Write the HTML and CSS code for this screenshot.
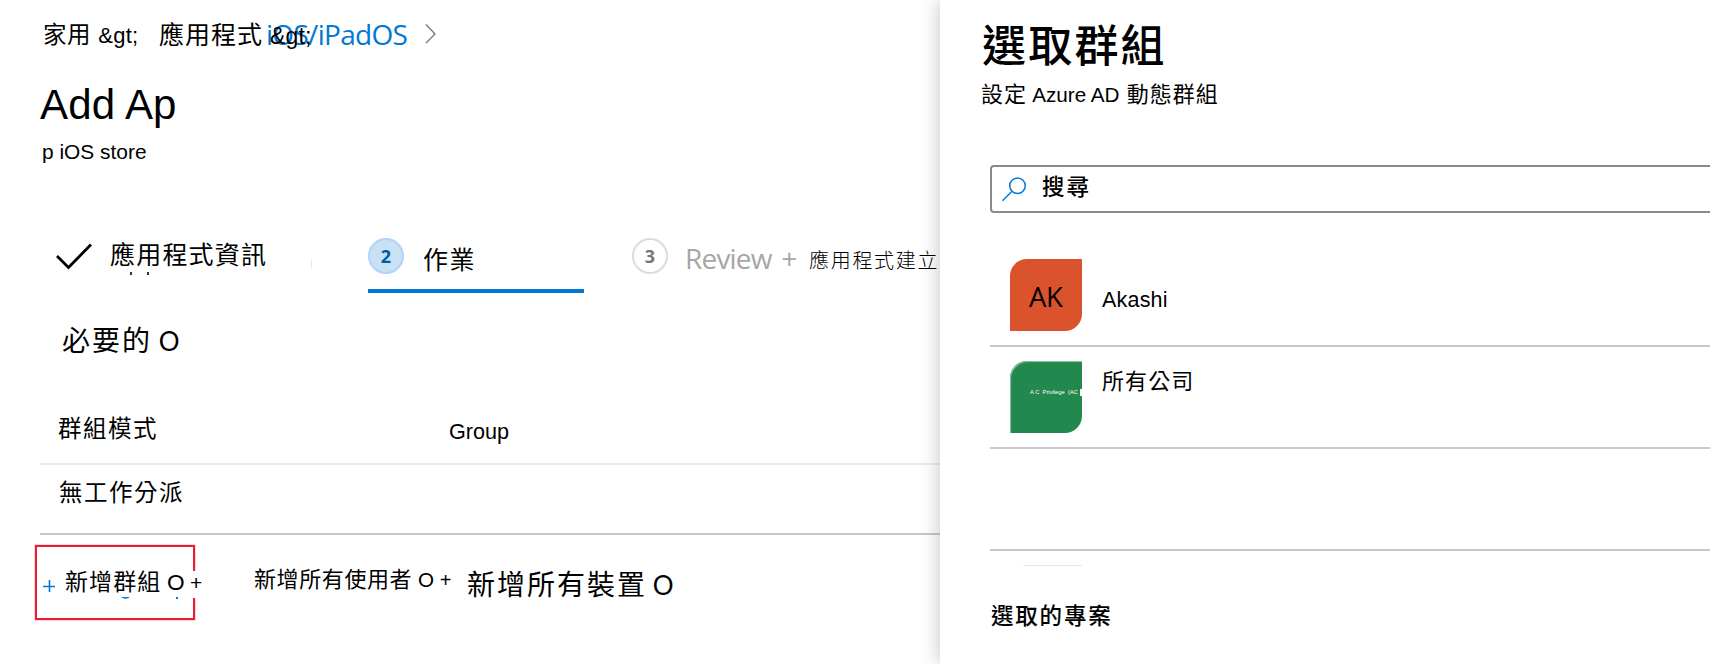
FILE: index.html
```html
<!DOCTYPE html>
<html lang="zh-Hant">
<head>
<meta charset="utf-8">
<title>Add App</title>
<link rel="stylesheet" href="styles.css">
</head>
<body>
<div class="app">
  <main class="page">
    <nav class="crumbs">
      <span class="crumb crumb-home">家用 <span class="sep">&amp;gt;</span></span>
      <span class="crumb crumb-apps">應用程式 <span class="sep">&amp;gt;</span></span>
      <a class="crumb crumb-ios">iOS/iPadOS</a>
      <svg class="chevron" width="12" height="22" viewBox="0 0 12 22"><path d="M1 1.5 10 11 1 20" fill="none" stroke="#767676" stroke-width="1.3"/></svg>
    </nav>
    <h1 class="title">Add Ap</h1>
    <p class="subtitle">p iOS store</p>

    <div class="steps">
      <div class="step step-info">
        <svg class="check" width="38" height="30" viewBox="0 0 38 30"><path d="M1 14 12.500 25.500 35 2.500" fill="none" stroke="#000" stroke-width="2.8"/></svg>
        <span class="step-label info-label">應用程式資訊<i class="dots"></i></span>
        <i class="tick"></i>
      </div>
      <div class="step step-assign">
        <span class="badge badge-on">2</span>
        <span class="step-label assign-label">作業</span>
      </div>
      <div class="step step-review">
        <span class="badge">3</span>
        <span class="review">Review <span class="review-plus">+</span></span>
        <span class="review-zh">應用程式建立</span>
      </div>
    </div>

    <h2 class="required">必要的 <span class="mark">O</span></h2>
    <div class="row row-head">
      <span class="cell-mode">群組模式</span>
      <span class="cell-group">Group</span>
    </div>
    <div class="row row-empty"><span class="cell-none">無工作分派</span></div>

    <div class="actions">
      <div class="add-group">
        <svg class="plus" width="12" height="12" viewBox="0 0 12 12"><path d="M0 6.5H12M6.5 0V12" stroke="#0078d4" stroke-width="1.6"/></svg>
        <span class="add-label">新增群組 <span class="o1">O</span> <span class="p1">+</span></span>
        <svg class="tails" width="60" height="3" viewBox="0 0 60 3"><path d="M1 0H10Q5.500 3.500 1 0ZM56 0H58V2H56Z" fill="#0078d4"/></svg>
      </div>
      <span class="add-users">新增所有使用者 <span class="o2">O</span> <span class="p2">+</span></span>
      <span class="add-devices">新增所有裝置 <span class="o3">O</span></span>
    </div>
  </main>

  <aside class="panel">
    <h2 class="panel-title">選取群組</h2>
    <p class="panel-sub">設定 <span class="lat">Azure AD</span> 動態群組</p>
    <div class="search">
      <svg class="glass" width="26" height="26" viewBox="0 0 26 26"><circle cx="15.500" cy="8.700" r="7.800" fill="none" stroke="#0078d4" stroke-width="1.500"/><path d="M10 14.200 .5 23.700" stroke="#0078d4" stroke-width="1.500"/></svg>
      <span class="search-text">搜尋</span>
    </div>
    <div class="item item-ak">
      <span class="avatar avatar-ak">AK</span>
      <span class="name name-ak">Akashi</span>
    </div>
    <div class="item item-ac">
      <span class="avatar avatar-ac"><span class="tiny">A C&nbsp; Privilege&nbsp; (AC</span><i class="chip"></i></span>
      <span class="name name-ac">所有公司</span>
    </div>
    <div class="item item-blank"></div>
    <i class="sliver"></i>
    <p class="selected">選取的專案</p>
  </aside>
</div>
</body>
</html>
```
FILE: styles.css
```css
* { box-sizing: border-box; }
body { margin: 0; background: #fff; color: #000; font-family: "Liberation Sans", "Noto Sans CJK TC", sans-serif; }
h1, h2, p { margin: 0; font-weight: 400; }
svg, i { display: block; flex: none; }
span, a, h1, h2, p { white-space: nowrap; }
.app { display: flex; width: 1710px; height: 664px; overflow: hidden; }
.page { width: 940px; height: 664px; flex: none; }

.crumbs { display: flex; align-items: flex-start; height: 86px; padding: 24px 0 0 43px; }
.crumb { flex: none; line-height: 1; }
.crumb-home { width: 116px; font-size: 23.5px; letter-spacing: 0.6px; }
.crumb-home .sep { font-size: 22px; letter-spacing: 0.2px; }
.crumb-apps { width: 107px; font-size: 25px; letter-spacing: 1px; margin-top: -1px; position: relative; z-index: 1; }
.crumb-apps .sep { font-size: 23px; letter-spacing: 0.2px; margin-left: -1px; }
.crumb-ios { width: 159px; margin-top: -4px; color: #0078d4; font-family: "Open Sans", sans-serif; font-size: 28px; letter-spacing: -0.7px; }
.chevron { margin-top: -1px; }

.title { height: 56px; padding-left: 40px; font-size: 42px; line-height: 38px; letter-spacing: 0.2px; }
.subtitle { height: 96px; padding-left: 42px; font-size: 20.9px; line-height: 20px; }

.steps { display: flex; height: 55px; }
.step { display: flex; align-items: flex-start; flex: none; }
.step-info { width: 368px; padding-left: 56px; }
.check { margin-top: 4px; }
.step-label { line-height: 1; font-size: 25px; letter-spacing: 1.2px; }
.info-label { width: 201px; margin: 5px 0 0 16px; }
.dots { width: 19px; height: 3px; margin: 4px 0 0 20px; border: solid #333; border-width: 0 2px; }
.tick { width: 1px; height: 10px; margin-top: 21px; background: #ececec; }
.step-assign { width: 216px; border-bottom: 4px solid #0078d4; }
.badge { width: 36px; height: 36px; flex: none; border: 2px solid #dcdcdc; border-radius: 50%; color: #767676; font: bold 18px/32px "Open Sans", sans-serif; text-align: center; }
.badge-on { background: #c8e1f3; border-color: #b3d1ff; color: #005ba1; }
.assign-label { margin: 10px 0 0 19px; letter-spacing: 1.6px; }
.step-review { margin-left: 48px; }
.review { width: 124px; margin: 6px 0 0 17px; color: #a6a6a6; font-family: "Open Sans", sans-serif; font-size: 28px; line-height: 1; letter-spacing: -0.8px; }
.review-plus { margin-left: 3px; }
.review-zh { margin-top: 13px; font-size: 20px; line-height: 1; letter-spacing: 1.7px; font-weight: 300; }

.required { height: 107px; padding: 34px 0 0 62px; font-size: 28px; line-height: 28px; letter-spacing: 2px; }
.mark, .o1, .o2, .o3 { font-family: Lato, sans-serif; letter-spacing: 0; }
.mark { font-size: 26px; margin-left: -3px; }
.row { margin-left: 40px; display: flex; align-items: flex-start; line-height: 1; font-size: 23.5px; letter-spacing: 1.5px; }
.row-head { height: 65px; padding: 18px 0 0 18px; border-bottom: 2px solid #ebebeb; }
.cell-mode { width: 391px; }
.cell-group { margin-top: 3px; font-size: 21.6px; letter-spacing: 0; }
.row-empty { height: 70px; padding: 17px 0 0 19px; border-bottom: 2px solid #c8c8c8; }

.actions { display: flex; align-items: flex-start; padding: 10px 0 0 35px; line-height: 1; }
.add-group { width: 160px; height: 75px; position: relative; display: flex; align-items: flex-start; flex: none; padding: 24px 0 0 6px; border: 2px solid #ec1c37; box-shadow: 0 0 1px #ec1c37; }
.plus { margin-top: 9px; }
.add-label { position: relative; margin-left: 8px; padding: 0 0 4px 2px; background: #fff; font-size: 23px; letter-spacing: 1.1px; }
.o1 { font-size: 22px; margin-left: -2px; }
.p1 { font-size: 21px; margin-left: -2px; letter-spacing: 0; }
.tails { position: absolute; left: 83px; top: 50px; }
.add-users { width: 213px; margin: 24px 0 0 59px; font-size: 22px; letter-spacing: 0.6px; }
.o2 { font-size: 20px; margin-left: -1px; }
.p2 { font-size: 20px; margin-left: -1px; letter-spacing: 0; }
.add-devices { margin-top: 27px; font-size: 28px; letter-spacing: 2px; }
.o3 { font-size: 26px; margin-left: -4px; }

.panel { width: 770px; height: 664px; flex: none; position: relative; background: #fff; box-shadow: 0 0 20px rgba(0, 0, 0, 0.24); }
.panel-title { height: 84px; padding: 25px 0 0 42px; font-size: 44px; line-height: 43px; letter-spacing: 2.2px; font-weight: 500; }
.panel-sub { height: 81px; padding-left: 41px; font-size: 22px; line-height: 21px; letter-spacing: 1px; }
.lat { font-size: 20.7px; letter-spacing: 0; margin: 0 0 0 -2px; }
.search { display: flex; align-items: flex-start; width: 740px; height: 48px; margin-left: 50px; padding: 10px 0 0 10px; border: 2px solid #8a8a8a; border-radius: 4px; }
.search-text { margin: 0 0 0 14px; font-size: 22.5px; line-height: 22px; letter-spacing: 2px; font-weight: 500; }
.item { display: flex; align-items: flex-start; margin-left: 50px; padding-left: 20px; border-bottom: 2px solid #c8c8c8; }
.item-ak { height: 134px; padding-top: 46px; }
.item-ac { height: 102px; padding-top: 14px; }
.item-blank { height: 102px; }
.avatar { width: 72px; height: 72px; flex: none; border-radius: 17px 0 17px 0; }
.avatar-ak { background: #da532c; padding-left: 19px; font: 27.5px/76px "Open Sans", sans-serif; letter-spacing: -0.3px; }
.avatar-ac { display: flex; background: #22884d; box-shadow: inset 1px 1px 1px #8fc4a5; color: #fff; padding: 27px 0 0 20px; }
.tiny { width: 50px; font-size: 5.8px; line-height: 8px; }
.chip { width: 2px; height: 7px; margin-top: 1px; background: #fff; }
.name { margin-left: 20px; line-height: 1; }
.name-ak { margin-top: 31px; font-size: 21.5px; letter-spacing: 0.2px; }
.name-ac { margin-top: 10px; font-size: 22px; letter-spacing: 1.1px; }
.sliver { width: 59px; height: 1px; margin: 14px 0 0 83px; background: #e4e4f2; }
.selected { padding: 40px 0 0 51px; font-size: 22.5px; line-height: 22px; letter-spacing: 1.8px; font-weight: 500; }
```
